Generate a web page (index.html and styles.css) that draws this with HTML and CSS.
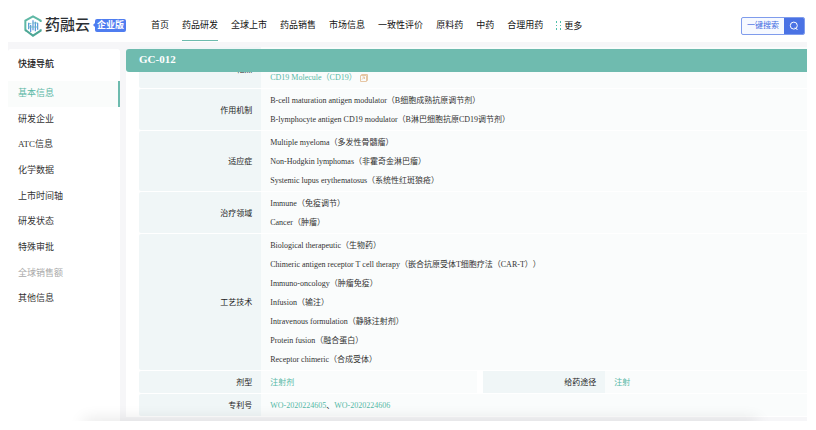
FILE: index.html
```html
<!DOCTYPE html>
<html lang="zh-CN">
<head>
<meta charset="utf-8">
<title>GC-012</title>
<link rel="stylesheet" href="styles.css">
</head>
<body>
<div class="app">
  <header class="header">
    <a class="brand" href="#">
      <svg class="brand-mark" viewBox="0 0 54 66" aria-hidden="true">
        <path d="M50 21V17L27 4 4 17V45L8 48" fill="none" stroke="#5fb8a5" stroke-width="6"/>
        <path d="M4 45L27 62 50 47V43" fill="none" stroke="#4da796" stroke-width="6"/>
        <path d="M14 23V43M20 30V51M27 16V46M34 20V49M41 24V44" stroke="#4f93d8" stroke-width="3.5"/>
        <path d="M14 26H22M12 36H42M26 24H42" stroke="#67b9c4" stroke-width="2.5"/>
      </svg>
      <span class="brand-name">药融云</span>
      <span class="brand-tag">企业版</span>
    </a>
    <nav class="nav">
      <a href="#">首页</a>
      <a class="current" href="#">药品研发</a>
      <a href="#">全球上市</a>
      <a href="#">药品销售</a>
      <a href="#">市场信息</a>
      <a href="#">一致性评价</a>
      <a href="#">原料药</a>
      <a href="#">中药</a>
      <a href="#">合理用药</a>
      <a class="more" href="#"><svg viewBox="0 0 6 9" aria-hidden="true"><path d="M0 0h1v2H0zM4 0h1v2H4zM0 4h1v1H0zM4 4h1v1H4zM0 7h1v2H0zM4 7h1v2H4z"/></svg>更多</a>
    </nav>
    <button class="search" type="button">
      <span class="search-text">一键搜索</span>
      <span class="search-icon"><svg viewBox="0 0 10 10" aria-hidden="true"><circle cx="4.8" cy="4.6" r="3.5"/><path d="M6 6.5L8.5 9"/></svg></span>
    </button>
  </header>
  <div class="body">
    <aside class="side">
      <h2>快捷导航</h2>
      <nav class="side-nav">
        <a class="current" href="#">基本信息</a>
        <a href="#">研发企业</a>
        <a href="#">ATC信息</a>
        <a href="#">化学数据</a>
        <a href="#">上市时间轴</a>
        <a href="#">研发状态</a>
        <a href="#">特殊审批</a>
        <a class="disabled" href="#">全球销售额</a>
        <a href="#">其他信息</a>
      </nav>
    </aside>
    <main class="panel">
      <h1>GC-012</h1>
      <table>
        <colgroup><col class="c1"><col class="c2"><col class="c3"><col></colgroup>
        <tr class="first"><th scope="row">靶点</th><td colspan="3"><a href="#">CD19 Molecule（CD19）<svg class="note" viewBox="0 0 8 8" aria-hidden="true"><path d="M1.5 1.5V.5H7.5V6.5H6.5M.5 1.5H6.5V7.5H.5ZM2 5.5L4.5 3M2.5 3H4.5V5"/></svg></a></td></tr>
        <tr><th scope="row">作用机制</th><td colspan="3"><p>B-cell maturation antigen modulator（B细胞成熟抗原调节剂）</p><p>B-lymphocyte antigen CD19 modulator（B淋巴细胞抗原CD19调节剂）</p></td></tr>
        <tr><th scope="row">适应症</th><td colspan="3"><p>Multiple myeloma（多发性骨髓瘤）</p><p>Non-Hodgkin lymphomas（非霍奇金淋巴瘤）</p><p>Systemic lupus erythematosus（系统性红斑狼疮）</p></td></tr>
        <tr><th scope="row">治疗领域</th><td colspan="3"><p>Immune（免疫调节）</p><p>Cancer（肿瘤）</p></td></tr>
        <tr><th scope="row">工艺技术</th><td colspan="3"><p>Biological therapeutic（生物药）</p><p>Chimeric antigen receptor T cell therapy（嵌合抗原受体T细胞疗法（CAR-T））</p><p>Immuno-oncology（肿瘤免疫）</p><p>Infusion（输注）</p><p>Intravenous formulation（静脉注射剂）</p><p>Protein fusion（融合蛋白）</p><p>Receptor chimeric（合成受体）</p></td></tr>
        <tr><th scope="row">剂型</th><td><a href="#">注射剂</a></td><th class="second" scope="row">给药途径</th><td><a href="#">注射</a></td></tr>
        <tr><th scope="row">专利号</th><td colspan="3"><a href="#">WO-2020224605</a>、<a href="#">WO-2020224606</a></td></tr>
      </table>
    </main>
  </div>
</div>
</body>
</html>
```

FILE: styles.css
```css
* { box-sizing: border-box; }

body {
  margin: 0 9px 9px 8px;
  background: #fff;
  color: #333;
  font: 8px/19px "Liberation Serif", "Noto Sans CJK SC", serif;
  text-spacing-trim: space-all;
}

a { color: inherit; text-decoration: none; }
h1, h2, p { margin: 0; }

.app {
  position: relative;
  overflow: hidden;
}

/* Soft shade along the lower edge */
.app::after {
  content: "";
  position: absolute;
  left: 76px;
  right: 50px;
  bottom: -8px;
  height: 8px;
  box-shadow: 0 0 16px rgba(0, 0, 0, 0.16);
}

.header {
  display: flex;
  align-items: center;
  height: 42px;
  padding: 9px 2px 0 16px;
}

.brand { display: flex; align-items: center; }
.brand-mark { width: 18px; height: 22px; }
.brand-name {
  margin-left: 3px;
  color: #2b2f33;
  font-size: 15px;
  font-weight: 500;
}
.brand-tag {
  position: relative;
  margin-left: 5px;
  padding: 0 2px;
  border-radius: 2px;
  background: #4f7df0;
  color: #fff;
  font-size: 9px;
  font-weight: 700;
  line-height: 13px;
}
.brand-tag::before {
  content: "";
  position: absolute;
  left: -2px;
  top: 4px;
  border: 2px solid transparent;
  border-left-width: 0;
  border-right-color: #4f7df0;
}

.nav {
  display: flex;
  align-self: stretch;
  gap: 13px;
  margin-left: 25px;
  color: #111;
  font-size: 9px;
  line-height: 32px;
}
.nav .current { border-bottom: 1px solid #6dbbae; height: 32px; }
.nav .more { display: flex; align-items: center; gap: 2px; height: 33px; }
.nav svg { width: 6px; height: 9px; fill: #4fc0aa; }

.search {
  display: flex;
  height: 18px;
  margin-left: auto;
  padding: 0;
  border: 1px solid #7f9cec;
  border-radius: 2px;
  overflow: hidden;
  background: #f6f9ff;
  color: #3f6be2;
  font: 8px/16px "Liberation Serif", "Noto Sans CJK SC", serif;
}
.search-text { padding: 0 5px; }
.search-icon {
  display: flex;
  align-items: center;
  justify-content: center;
  width: 20px;
  background: #4a72e4;
}
.search-icon svg { width: 10px; height: 10px; fill: none; stroke: #fff; }

.body {
  display: flex;
  gap: 6px;
  padding-top: 7px;
  background: #f6f6f8;
}

.side {
  width: 112px;
  border-radius: 3px 3px 0 0;
  background: #fff;
  font-size: 9px;
}
.side h2 {
  margin-bottom: 1px;
  padding-left: 10px;
  color: #222;
  font-size: 9px;
  font-weight: 500;
  line-height: 31px;
}
.side-nav {
  display: grid;
  grid-auto-rows: 1fr;
  height: 231px;
}
.side-nav a {
  padding-left: 10px;
  line-height: 25px;
}
.side-nav .current {
  border-right: 2px solid #6dbbae;
  background: #fafcfb;
  color: #5bb8a6;
}
.side-nav .disabled { color: #aaa; }

.panel {
  flex: 1;
  min-width: 0;
  margin-bottom: 4px;
  border-radius: 3px 0 0 0;
  background: #fff;
}
.panel h1 {
  position: relative;
  z-index: 1;
  padding: 0 13px 2px;
  border-radius: 3px 0 0 3px;
  background: #6fbbaf;
  color: #fff;
  font-size: 11px;
  line-height: 21px;
}

table {
  width: calc(100% - 13px);
  margin: -26px 0 0 13px;
  border-spacing: 0 1px;
  table-layout: fixed;
}
.c1 { width: 18.3%; }
.c2 { width: 32.3%; }
.c3 { width: 19.2%; }

th, td { padding: 2px 9px 1px; }
th {
  border-radius: 2px 0 0 2px;
  background: #f0f6f7;
  color: #222;
  font-weight: 400;
  text-align: right;
}
td { background: #fafcfc; }
td a { color: #55b8a6; }
.second {
  border-left: 6px solid #fff;
  border-radius: 0;
}
.first th { padding-top: 5px; }
.first td { padding-top: 21px; }
.note {
  width: 8px;
  height: 8px;
  margin-left: 3px;
  vertical-align: -2px;
  fill: none;
  stroke: #e6c6a4;
}
```
